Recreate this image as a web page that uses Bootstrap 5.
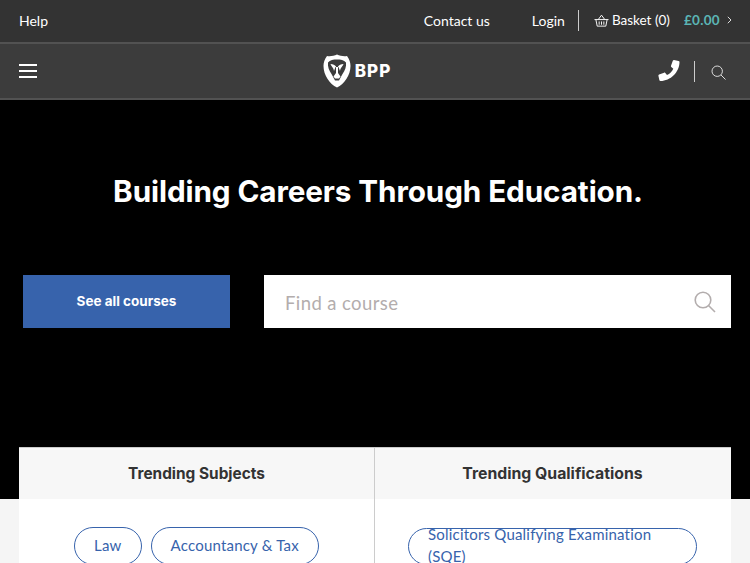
<!DOCTYPE html>
<html lang="en">
<head>
    <meta charset="UTF-8">
    <meta name="viewport" content="width=device-width, initial-scale=1.0">
    <title>BPP</title>
    <link rel="stylesheet" href="https://cdn.jsdelivr.net/npm/bootstrap@5.3.0/dist/css/bootstrap.min.css">
    <style>
        html, body { height: 563px; overflow: hidden; }
        body { font-family: "Lato", "Open Sans", sans-serif; background: #f5f5f5; color: #333; }
        .top-strip { height: 44px; background: #333; border-bottom: 2px solid #525252; padding: 0 18px 2px 19px; font-size: 14px; }
        .top-strip a { color: #fff; text-decoration: none; }
        .top-rule { width: 1px; height: 21px; background: #ccc; }
        .login-link { margin-left: 42px; }
        .login-rule { margin: 0 15px 0 13px; }
        .basket-link { font-size: 13.5px; gap: 3px; }
        .basket-price { color: #5bb5b5; font-weight: 700; font-size: 13.5px; letter-spacing: .3px; margin: 0 7px 0 14px; }
        .main-strip { height: 56px; background: #3c3c3c; border-bottom: 2px solid #525252; padding: 0 24px 0 19px; }
        .burger { width: 18px; display: block; margin-right: 19px; }
        .burger i { display: block; height: 1.5px; background: #fff; margin-bottom: 4.5px; }
        .burger i:last-child { margin-bottom: 0; }
        .logo-text { color: #fff; font-family: "Inter", sans-serif; font-weight: 800; font-size: 17px; letter-spacing: 1px; line-height: 1; }
        .nav-rule { margin: 0 16px 0 14px; }
        .nav-search { margin-top: 2px; }
        .hero { background: #000; height: 399px; padding: 73px 19px 0 23px; }
        .hero-title { color: #fff; font-family: "Inter", sans-serif; font-weight: 700; font-size: 29.7px; line-height: 36px; margin: 0; text-align: center; padding-left: 2px; letter-spacing: -.1px; }
        .search-row { margin-top: 66px; gap: 34px; }
        .see-all { width: 207px; height: 53px; background: #3763ac; border: 0; border-radius: 0; color: #fff; font-family: "Inter", sans-serif; font-weight: 700; font-size: 13.5px; padding-bottom: 5px; padding-top: 5px; }
        .find-box { height: 53px; background: #fff; padding: 4px 15px 0 21px; }
        .find-box input { border: 0; outline: 0; padding: 0; font-size: 18.5px; letter-spacing: .4px; color: #333; background: transparent; }
        .find-box input::placeholder { color: #b3adad; opacity: 1; }
        .trend-card { margin: -52px 19px 0; background: #fff; border: 0; border-radius: 0; }
        .trend-head { height: 52px; background: #f7f7f7; font-family: "Inter", sans-serif; font-weight: 700; font-size: 15.4px; color: #333; border-top: 1px solid #ccc; }
        .trend-col { width: 356px; }
        .trend-col:first-child { width: 355px; }
        .trend-col + .trend-col { border-left: 1px solid #ccc; }
        .trend-head .trend-col:last-child { font-size: 15.8px; }
        .trend-body { padding: 28px 33px 0; gap: 9px; height: 120px; }
        .subject-pill { border: 1px solid #3763ac; border-radius: 19px; color: #3763ac; text-decoration: none; font-size: 15px; line-height: 22px; padding: 0 19px 2px; height: 38px; letter-spacing: .2px; display: flex; align-items: center; }
        .subject-pill.two-line { width: 292px; height: 37px; margin-top: 1px; padding-bottom: 4px; }
    </style>
</head>
<body>
    <div class="top-strip d-flex align-items-center">
        <a href="#">Help</a>
        <div class="ms-auto d-flex align-items-center">
            <a href="#">Contact us</a>
            <a href="#" class="login-link">Login</a>
            <span class="top-rule login-rule"></span>
            <a href="#" class="basket-link d-flex align-items-center">
                <svg width="15" height="13" viewBox="0 0 16 13" fill="none" stroke="#fff" stroke-width="1"><path d="M.5 5.500h15M2 5.500l1.400 7h9.200L14 5.500M4.500 5.500 8 .8l3.500 4.700M5.500 7.500v3.500M8 7.500v3.500M10.500 7.500v3.500"/></svg>
                Basket (0)
            </a>
            <span class="basket-price">£0.00</span>
            <svg width="5" height="8" viewBox="0 0 5 8" fill="none" stroke="#ddd" stroke-width="1"><path d="M.8.8 4 4 .8 7.200"/></svg>
        </div>
    </div>

    <div class="main-strip d-flex align-items-center">
        <a href="#" class="burger"><i></i><i></i><i></i></a>
        <div class="mx-auto d-flex align-items-center gap-1">
            <svg width="28" height="34" viewBox="0 0 28 34">
                <path fill="#fff" d="M14 .5c3 1.500 7 2 10 1.500 2.500 3 3.500 7 3.500 10 0 9-6 18-13.500 21.500C6.500 30 .5 21 .5 12 .5 9 1.500 5 4 2c3 .5 7 0 10-1.500z"/>
                <path fill="#3c3c3c" d="M14 5.500c3.500 0 7 .5 9 3 .5 4-1 8-3.500 11.500L16 26.500h-4L8.500 20C6 16.500 4.500 12.500 5 8.500c2-2.500 5.500-3 9-3z"/>
                <path fill="#fff" d="M7.500 10c2.500 0 4.500 1 5.500 2.500V19l-2.500 3.500 1.500 2h4l1.500-2L15 19v-6.500c1-1.500 3-2.500 5.500-2.500-1 3-3 3.500-3.500 7l-1.500-4h-3L11 17c-.5-3.500-2.500-4-3.500-7z"/>
            </svg>
            <span class="logo-text">BPP</span>
        </div>
        <div class="d-flex align-items-center">
            <svg width="22" height="22" viewBox="0 0 22 22"><path fill="#fff" d="M20.500 1 16 0c-.6 0-1 .3-1.200.8l-1.800 5c-.2.400 0 .9.300 1.200l2 1.700c-1.300 2.800-3.500 5-6.300 6.300l-1.700-2c-.3-.3-.8-.5-1.200-.3l-5 1.800c-.5.200-.8.700-.7 1.200l1 4.500c.1.500.6.800 1.100.8C12.500 21 21.500 12 21.500 2c0-.5-.4-.9-1-1z"/></svg>
            <span class="top-rule nav-rule"></span>
            <svg class="nav-search" width="15" height="15" viewBox="0 0 15 15" fill="none" stroke="#ddd" stroke-width="1"><circle cx="6.200" cy="6.200" r="5.200"/><path d="m10 10 4.500 4.500"/></svg>
        </div>
    </div>

    <div class="hero">
        <h1 class="hero-title">Building Careers Through Education.</h1>
        <div class="search-row d-flex">
            <button type="button" class="btn see-all flex-shrink-0">See all courses</button>
            <div class="find-box flex-grow-1 d-flex align-items-center">
                <input type="text" class="flex-grow-1" placeholder="Find a course">
                <svg class="mb-1" width="22" height="22" viewBox="0 0 22 22" fill="none" stroke="#b3adad" stroke-width="1.600"><circle cx="9" cy="9" r="7.800"/><path d="m14.500 14.500 6.500 6.500"/></svg>
            </div>
        </div>
    </div>

    <div class="card trend-card">
        <div class="d-flex trend-head">
            <div class="trend-col d-flex align-items-center justify-content-center">Trending Subjects</div>
            <div class="trend-col d-flex align-items-center justify-content-center">Trending Qualifications</div>
        </div>
        <div class="d-flex">
            <div class="trend-col trend-body d-flex justify-content-center">
                <a href="#" class="subject-pill">Law</a>
                <a href="#" class="subject-pill">Accountancy &amp; Tax</a>
            </div>
            <div class="trend-col trend-body d-flex">
                <a href="#" class="subject-pill two-line">Solicitors Qualifying Examination (SQE)</a>
            </div>
        </div>
    </div>

    <script src="https://cdn.jsdelivr.net/npm/bootstrap@5.3.0/dist/js/bootstrap.bundle.min.js"></script>
</body>
</html>
